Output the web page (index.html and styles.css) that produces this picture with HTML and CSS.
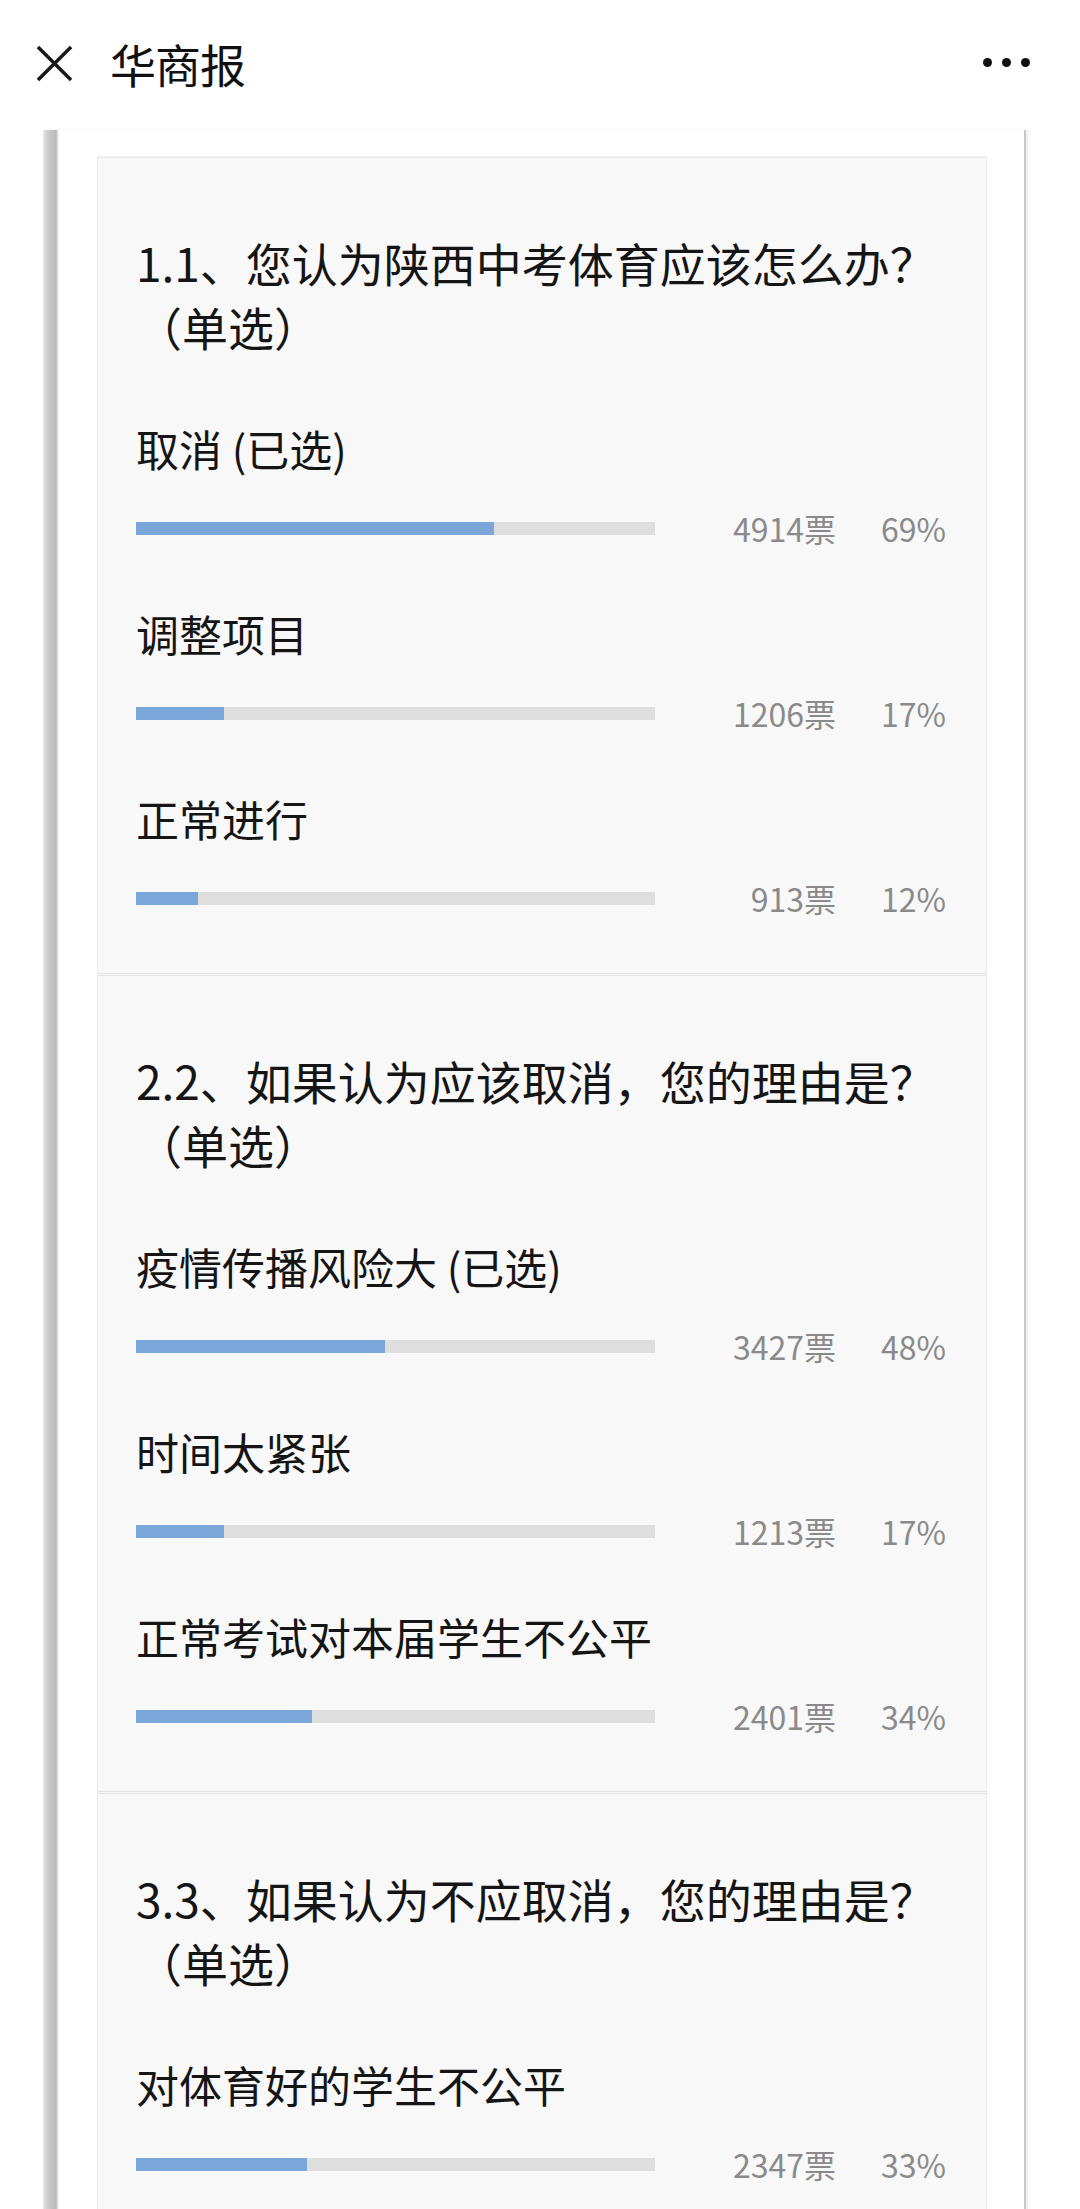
FILE: index.html
```html
<!DOCTYPE html>
<html lang="zh-CN">
<head>
<meta charset="utf-8">
<title>华商报</title>
<link rel="stylesheet" href="styles.css">
</head>
<body>
<header class="topbar">
  <svg class="close-icon" width="38" height="38" viewBox="0 0 38 38" aria-hidden="true">
    <path d="M2 2 L36 36 M36 2 L2 36" stroke="#1a1a1a" stroke-width="3.6" stroke-linecap="butt" fill="none"/>
  </svg>
  <h1 class="title">华商报</h1>
  <div class="more" aria-label="更多">
    <span class="dot"></span><span class="dot"></span><span class="dot"></span>
  </div>
</header>

<main class="frame">
  <div class="card">
    <section class="question">
      <h2 class="q-title">1.1、您认为陕西中考体育应该怎么办？（单选）</h2>
      <div class="options">
        <div class="option">
          <div class="label">取消 (已选)</div>
          <div class="row">
            <div class="track"><div class="fill" style="width:69%"></div></div>
            <span class="votes">4914票</span>
            <span class="pct">69%</span>
          </div>
        </div>
        <div class="option">
          <div class="label">调整项目</div>
          <div class="row">
            <div class="track"><div class="fill" style="width:17%"></div></div>
            <span class="votes">1206票</span>
            <span class="pct">17%</span>
          </div>
        </div>
        <div class="option">
          <div class="label">正常进行</div>
          <div class="row">
            <div class="track"><div class="fill" style="width:12%"></div></div>
            <span class="votes">913票</span>
            <span class="pct">12%</span>
          </div>
        </div>
      </div>
    </section>

    <section class="question">
      <h2 class="q-title">2.2、如果认为应该取消，您的理由是？（单选）</h2>
      <div class="options">
        <div class="option">
          <div class="label">疫情传播风险大 (已选)</div>
          <div class="row">
            <div class="track"><div class="fill" style="width:48%"></div></div>
            <span class="votes">3427票</span>
            <span class="pct">48%</span>
          </div>
        </div>
        <div class="option">
          <div class="label">时间太紧张</div>
          <div class="row">
            <div class="track"><div class="fill" style="width:17%"></div></div>
            <span class="votes">1213票</span>
            <span class="pct">17%</span>
          </div>
        </div>
        <div class="option">
          <div class="label">正常考试对本届学生不公平</div>
          <div class="row">
            <div class="track"><div class="fill" style="width:34%"></div></div>
            <span class="votes">2401票</span>
            <span class="pct">34%</span>
          </div>
        </div>
      </div>
    </section>

    <section class="question">
      <h2 class="q-title">3.3、如果认为不应取消，您的理由是？（单选）</h2>
      <div class="options">
        <div class="option">
          <div class="label">对体育好的学生不公平</div>
          <div class="row">
            <div class="track"><div class="fill" style="width:33%"></div></div>
            <span class="votes">2347票</span>
            <span class="pct">33%</span>
          </div>
        </div>
      </div>
    </section>
  </div>
</main>
</body>
</html>
```

FILE: styles.css
```css
html, body {
  margin: 0;
  padding: 0;
  background: #ffffff;
  overflow: hidden;
}

body {
  width: 1080px;
  height: 2209px;
  font-family: "Noto Sans CJK SC", "Noto Sans", sans-serif;
  color: #1a1a1a;
}

.topbar {
  height: 130px;
  display: flex;
  align-items: center;
  padding: 0 50px 0 36px;
  box-sizing: border-box;
  background: #ffffff;
}

.close-icon {
  flex: none;
  width: 37px;
  height: 37px;
  margin-top: -3px;
}

.title {
  margin: -4px 0 0 37px;
  font-size: 46px;
  font-weight: 400;
  line-height: 1;
  color: #111111;
  letter-spacing: -1px;
}

.more {
  margin-left: auto;
  display: flex;
  gap: 10px;
  margin-top: -5px;
}

.dot {
  width: 9px;
  height: 9px;
  border-radius: 50%;
  background: #111111;
}

.frame {
  position: relative;
  margin-left: 43px;
  width: 980px;
  box-sizing: border-box;
  padding: 27px 36px 0 54px;
  background: linear-gradient(to right, #e8e8e8 0px, #cfcfcf 4px, #c2c2c2 9px, #b9b9b9 13px, #e6e6e6 15px, #ffffff 16px) no-repeat left top / 16px 100%;
  box-shadow: 1px 0 0 #ffffff, 2px 0 0 #c9c9c9, 3px 0 0 #c9c9c9, 5px 0 3px #ececec;
  min-height: 2079px;
}

.card {
  background: #f8f8f8;
  border: 1px solid #ebebeb;
  box-shadow: 0 -1px 0 #f1f1f1;
}

.question {
  padding: 72px 40px 55px 38px;
  border-top: 3px double #e3e3e3;
}

.question:first-child {
  border-top: 0;
}

.q-title {
  margin: 0;
  font-size: 46px;
  font-weight: 400;
  line-height: 64px;
  color: #151515;
}

.options {
  margin-top: 62px;
  display: flex;
  flex-direction: column;
  gap: 57px;
}

.option {
  display: flex;
  flex-direction: column;
  gap: 32px;
}

.label {
  font-size: 43px;
  line-height: 56px;
  color: #151515;
}

.row {
  height: 40px;
  display: flex;
  align-items: center;
}

.track {
  flex: none;
  width: 519px;
  height: 13px;
  background: #dedede;
}

.fill {
  height: 100%;
  background: #7aa6da;
}

.votes {
  flex: 1;
  text-align: right;
  font-size: 32px;
  line-height: 40px;
  color: #8a8a8a;
}

.pct {
  flex: none;
  width: 110px;
  text-align: right;
  font-size: 32px;
  line-height: 40px;
  color: #8a8a8a;
}
```
